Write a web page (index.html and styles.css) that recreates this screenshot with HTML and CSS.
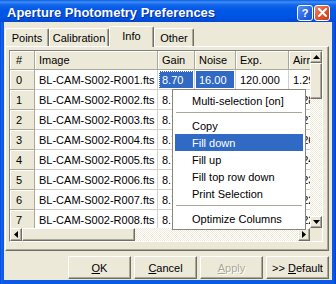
FILE: index.html
```html
<!DOCTYPE html>
<html>
<head>
<meta charset="utf-8">
<link rel="stylesheet" href="styles.css">
</head>
<body>
<div class="window">
  <div class="titlebar">
    <span class="title">Aperture Photometry Preferences</span>
    <div class="tb-buttons">
      <span class="tb-btn help">?</span>
      <span class="tb-btn close"><svg width="9" height="9" viewBox="0 0 9 9"><path d="M1 1 L8 8 M8 1 L1 8" stroke="#fff" stroke-width="2" stroke-linecap="square"/></svg></span>
    </div>
  </div>
  <div class="frame">
    <div class="client">
      <div class="tabs">
        <div class="tab t-points">Points</div>
        <div class="tab t-calib">Calibration</div>
        <div class="tab t-info active">Info</div>
        <div class="tab t-other">Other</div>
      </div>
      <div class="panel">
        <div class="grid">
          <div class="view">
            <div class="table">
              <div class="c hd num">#</div><div class="c hd">Image</div><div class="c hd">Gain</div><div class="c hd">Noise</div><div class="c hd">Exp.</div><div class="c hd">Airmass</div>
              <div class="c fx num">0</div><div class="c">BL-CAM-S002-R001.fts</div><div class="c sel focus">8.70</div><div class="c sel">16.00</div><div class="c">120.000</div><div class="c">1.295</div>
              <div class="c fx num">1</div><div class="c">BL-CAM-S002-R002.fts</div><div class="c">8.70</div><div class="c">16.00</div><div class="c">120.000</div><div class="c">1.283</div>
              <div class="c fx num">2</div><div class="c">BL-CAM-S002-R003.fts</div><div class="c">8.70</div><div class="c">16.00</div><div class="c">120.000</div><div class="c">1.271</div>
              <div class="c fx num">3</div><div class="c">BL-CAM-S002-R004.fts</div><div class="c">8.70</div><div class="c">16.00</div><div class="c">120.000</div><div class="c">1.260</div>
              <div class="c fx num">4</div><div class="c">BL-CAM-S002-R005.fts</div><div class="c">8.70</div><div class="c">16.00</div><div class="c">120.000</div><div class="c">1.249</div>
              <div class="c fx num">5</div><div class="c">BL-CAM-S002-R006.fts</div><div class="c">8.70</div><div class="c">16.00</div><div class="c">120.000</div><div class="c">1.239</div>
              <div class="c fx num">6</div><div class="c">BL-CAM-S002-R007.fts</div><div class="c">8.70</div><div class="c">16.00</div><div class="c">120.000</div><div class="c">1.229</div>
              <div class="c fx num">7</div><div class="c">BL-CAM-S002-R008.fts</div><div class="c">8.70</div><div class="c">16.00</div><div class="c">120.000</div><div class="c">1.220</div>
            </div>
          </div>
          <div class="vscroll">
            <div class="sbtn"><svg width="7" height="4" viewBox="0 0 7 4"><path d="M3.5 0 L7 4 L0 4 Z" fill="#000"/></svg></div>
            <div class="thumb vthumb"></div>
            <div class="track"></div>
            <div class="sbtn"><svg width="7" height="4" viewBox="0 0 7 4"><path d="M0 0 L7 0 L3.5 4 Z" fill="#000"/></svg></div>
          </div>
          <div class="hscroll">
            <div class="sbtn"><svg width="4" height="7" viewBox="0 0 4 7"><path d="M4 0 L4 7 L0 3.5 Z" fill="#000"/></svg></div>
            <div class="thumb hthumb"></div>
            <div class="track"></div>
            <div class="sbtn"><svg width="4" height="7" viewBox="0 0 4 7"><path d="M0 0 L4 3.5 L0 7 Z" fill="#000"/></svg></div>
          </div>
          <div class="corner"></div>
        </div>
      </div>
      <div class="buttons">
        <div class="btn"><span><u>O</u>K</span></div>
        <div class="btn"><span><u>C</u>ancel</span></div>
        <div class="btn disabled"><span><u>A</u>pply</span></div>
        <div class="btn"><span>&gt;&gt;&nbsp;<u>D</u>efault</span></div>
      </div>
    </div>
  </div>
  <div class="menu">
    <div class="mi">Multi-selection [on]</div>
    <div class="msep"></div>
    <div class="mi">Copy</div>
    <div class="mi hl">Fill down</div>
    <div class="mi">Fill up</div>
    <div class="mi">Fill top row down</div>
    <div class="mi">Print Selection</div>
    <div class="msep"></div>
    <div class="mi">Optimize Columns</div>
  </div>
</div>
</body>
</html>
```

FILE: styles.css
```css
* { box-sizing: border-box; }
html, body { margin: 0; padding: 0; }
body {
  width: 336px; height: 284px; overflow: hidden;
  font-family: "Liberation Sans", Arial, sans-serif;
  font-size: 11px; color: #000;
}
.window {
  position: relative;
  width: 336px; height: 284px;
  display: flex; flex-direction: column;
  background: #0A50DA;
}
.titlebar {
  height: 22px; flex: none;
  display: flex; align-items: center; justify-content: space-between;
  padding: 0 6px 0 7px;
  background: linear-gradient(#0A5CDE 0%, #3D8DF8 9%, #1466EA 22%, #0058E6 45%, #0055E4 75%, #0049D4 100%);
}
.title {
  color: #fff; font-weight: bold; font-size: 13px;
  text-shadow: 1px 1px 0 #0A2E9A;
  margin-top: 2px;
}
.tb-buttons { display: flex; gap: 1px; margin-top: 3px; }
.tb-btn {
  width: 16px; height: 16px; border-radius: 3px;
  border: 1px solid #fff;
  display: flex; align-items: center; justify-content: center;
  color: #fff; font-weight: bold; font-size: 11px;
}
.help { background: linear-gradient(135deg, #5C94F4, #2663E0 60%, #1A52CC); }
.close { background: linear-gradient(135deg, #E88C6C, #E0542E 55%, #C93A12); }
.frame {
  flex: 1; padding: 0 4px 4px;
  background: linear-gradient(90deg, #0831D9 0, #1668EF 1px, #0A5AE6 3px, #0A5AE6 calc(100% - 3px), #0A4ED8 calc(100% - 1px), #0831D9 100%);
}
.client {
  height: 100%;
  background: #ECE9D8;
  padding: 4px 3px 0 1px;
  display: flex; flex-direction: column;
}
.tabs {
  height: 20px; display: flex; align-items: flex-end;
  position: relative; z-index: 2;
}
.tab {
  height: 18px;
  border: 1px solid #fff; border-bottom: none;
  border-right: 1px solid #716F64;
  box-shadow: inset -1px 0 0 #ACA899;
  border-radius: 2px 2px 0 0;
  display: flex; align-items: center; justify-content: center;
  font-size: 11px;
  background: #ECE9D8;
}
.t-points { width: 44px; }
.t-calib { width: 60px; }
.t-info { width: 45px; }
.t-other { width: 40px; }
.tab.active {
  height: 21px; margin-bottom: -1px;
  padding-bottom: 3px;
}
.panel {
  width: 324px; height: 205px;
  border: 1px solid #fff;
  border-right-color: #716F64; border-bottom-color: #716F64;
  box-shadow: inset -1px -1px 0 #ACA899;
  padding: 3px 0 0 3px;
}
.grid {
  width: 314px; height: 192px;
  border: 1px solid #808080;
  border-right-color: #fff; border-bottom-color: #fff;
  display: grid;
  grid-template-columns: 300px 12px;
  grid-template-rows: 177px 13px;
  background: #fff;
}
.view { overflow: hidden; position: relative; }
.table {
  display: grid;
  grid-template-columns: 25px 123px 37px 41px 53px 70px;
  grid-template-rows: 19px repeat(8, 20px);
}
.c {
  border-right: 1px solid #D4D0C8;
  border-bottom: 1px solid #D4D0C8;
  padding-left: 4px;
  display: flex; align-items: center;
  white-space: nowrap; overflow: hidden;
  background: #fff;
}
.c.hd, .c.fx {
  background: #ECE9D8;
  border-right-color: #ACA899; border-bottom-color: #ACA899;
  box-shadow: inset 1px 1px 0 #fff;
}
.c.num { padding-left: 6px; }
.c.sel { background: #316AC5; color: #fff; box-shadow: inset 0 0 0 1px #fff; }
.c.focus { outline: 1px dotted #fff; outline-offset: -2px; }
.vscroll { display: flex; flex-direction: column; }
.hscroll { display: flex; }
.sbtn {
  flex: none; width: 12px; height: 12px;
  background: #ECE9D8;
  border: 1px solid #fff; border-right-color: #716F64; border-bottom-color: #716F64;
  box-shadow: inset -1px -1px 0 #ACA899;
  display: flex; align-items: center; justify-content: center;
}
.hscroll .sbtn { height: 13px; }
.thumb {
  background: #ECE9D8;
  border: 1px solid #fff; border-right-color: #716F64; border-bottom-color: #716F64;
  box-shadow: inset -1px -1px 0 #ACA899;
  flex: none;
}
.vthumb { height: 36px; }
.hthumb { width: 113px; }
.track {
  flex: 1;
  background-color: #fff;
  background-image: repeating-conic-gradient(#ECE9D8 0 25%, #fff 0 50%);
  background-size: 2px 2px;
}
.corner { background: #ECE9D8; }
.buttons {
  display: flex; gap: 3px;
  justify-content: flex-end;
  margin-top: 5px;
}
.btn {
  width: 63px; height: 23px;
  border: 1px solid #fff; border-right-color: #716F64; border-bottom-color: #716F64;
  box-shadow: inset -1px -1px 0 #ACA899;
  display: flex; align-items: center; justify-content: center;
  font-size: 11px;
}
.btn.disabled { color: #ACA899; text-shadow: 1px 1px 0 #fff; }
.menu {
  position: absolute; left: 172px; top: 89px;
  width: 134px; padding: 2px;
  background: #fff;
  border: 1px solid #8A867A;
  z-index: 5;
}
.mi {
  height: 17px; padding-left: 17px;
  display: flex; align-items: center;
  font-size: 11px;
}
.mi.hl { background: #316AC5; color: #fff; }
.msep { height: 8px; padding: 3px 1px 0; }
.msep::before { content: ""; display: block; height: 1px; background: #ACA899; }
```
